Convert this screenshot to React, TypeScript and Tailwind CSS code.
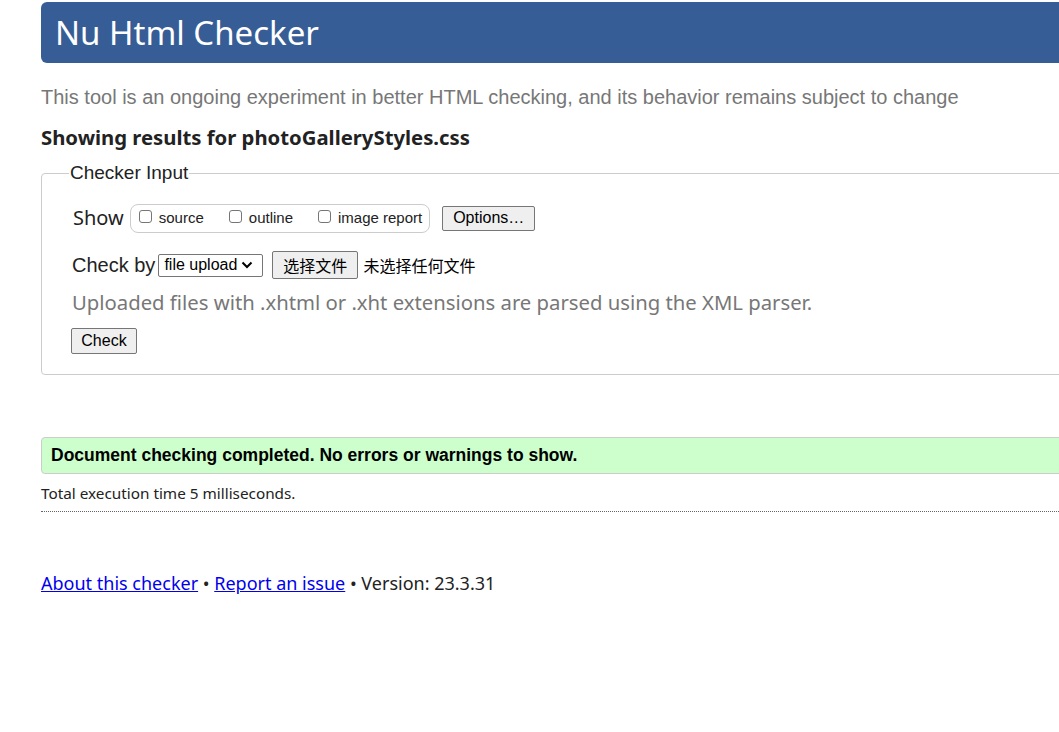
import React from "react";

const seg = { fontFamily: '"Noto Sans", "Open Sans", sans-serif' };
const arial = { fontFamily: '"Liberation Sans", Arial, sans-serif' };

export default function App() {
  return (
    <div className="w-[1059px] h-[732px] overflow-hidden bg-white text-[#222]">
      <div className="ml-[41px] w-[1100px] pt-[2px]">
        <header className="h-[61px] bg-[#365d95] rounded-[6px] flex items-center pl-[14px]">
          <h1 className="text-white text-[33px] leading-none -mt-[1px]" style={seg}>
            Nu Html Checker
          </h1>
        </header>
        <p className="mt-[22px] text-[20px] leading-[24px] text-[#777]" style={arial}>
          This tool is an ongoing experiment in better HTML checking, and its behavior remains subject to change
        </p>
        <p className="mt-[15px] text-[20.3px] leading-[26px] font-bold text-[#222]" style={seg}>
          Showing results for photoGalleryStyles.css
        </p>
        <fieldset className="mt-[12px] border border-[#ccc] rounded-[4px] px-[30px] pt-[19px] pb-[20px]">
          <legend className="ml-[-3px] px-[1px] text-[19px] leading-[22px] text-[#222]" style={arial}>
            Checker Input
          </legend>
          <div className="flex items-center h-[30px]">
            <span className="text-[20px] text-[#222] mr-[6px] ml-[1px]" style={seg}>Show</span>
            <div
              className="flex items-center h-[29px] border border-[#ccc] rounded-[8px] pl-[8px] pr-[7px] text-[15px] text-[#222]"
              style={arial}
            >
              <label className="flex items-center">
                <span className="w-[13px] h-[13px] border border-[#767676] rounded-[3px] bg-white -mt-[4px]" />
                <span className="ml-[7px]">source</span>
              </label>
              <label className="flex items-center ml-[25px]">
                <span className="w-[13px] h-[13px] border border-[#767676] rounded-[3px] bg-white -mt-[4px]" />
                <span className="ml-[7px]">outline</span>
              </label>
              <label className="flex items-center ml-[25px]">
                <span className="w-[13px] h-[13px] border border-[#767676] rounded-[3px] bg-white -mt-[4px]" />
                <span className="ml-[7px]">image report</span>
              </label>
            </div>
            <button
              className="ml-[12px] h-[25px] w-[93px] border border-[#767676] rounded-[2px] bg-[#efefef] text-[16px] text-black leading-none"
              style={arial}
            >
              Options…
            </button>
          </div>
          <div className="flex items-center mt-[18px] h-[28px]">
            <span className="text-[20px] text-[#222]" style={arial}>Check by</span>
            <div
              className="ml-[3px] h-[23px] w-[105px] border border-[#767676] rounded-[2px] bg-white flex items-center pl-[5px] text-[16px] text-black"
              style={arial}
            >
              <span>file upload</span>
              <svg className="ml-[4px]" width="12" height="8" viewBox="0 0 12 8">
                <path d="M1.5 1.5 L6 6 L10.5 1.5" stroke="#000" strokeWidth="2" fill="none" />
              </svg>
            </div>
            <button
              className="ml-[9px] h-[28px] w-[86px] border border-[#767676] rounded-[2px] bg-[#efefef] text-[16px] text-black"
              style={{ fontFamily: '"Noto Sans CJK SC", sans-serif' }}
            >
              选择文件
            </button>
            <span
              className="ml-[5px] text-[16px] text-black"
              style={{ fontFamily: '"Noto Sans CJK SC", sans-serif' }}
            >
              未选择任何文件
            </span>
          </div>
          <p className="mt-[10px] text-[20.3px] leading-[26px] text-[#777]" style={seg}>
            Uploaded files with .xhtml or .xht extensions are parsed using the XML parser.
          </p>
          <button
            className="mt-[13px] -ml-[1px] h-[26px] w-[66px] border border-[#767676] rounded-[2px] bg-[#efefef] text-[16px] text-black"
            style={arial}
          >
            Check
          </button>
        </fieldset>
        <div className="mt-[62px] h-[37px] bg-[#ccffcc] border border-[#ccc] rounded-[4px] flex items-center pl-[9px]">
          <span className="text-[17.5px] font-bold text-black" style={arial}>
            Document checking completed. No errors or warnings to show.
          </span>
        </div>
        <p className="mt-[10px] text-[15.3px] leading-[18px] text-[#222]" style={seg}>
          Total execution time 5 milliseconds.
        </p>
        <div className="mt-[9px] border-t border-dotted border-[#666]" />
        <p className="mt-[59px] text-[18px] leading-[24px] text-[#222]" style={seg}>
          <a href="#" className="text-[#0000ee] underline">About this checker</a>
          {" • "}
          <a href="#" className="text-[#0000ee] underline">Report an issue</a>
          {" • Version: 23.3.31"}
        </p>
      </div>
    </div>
  );
}
